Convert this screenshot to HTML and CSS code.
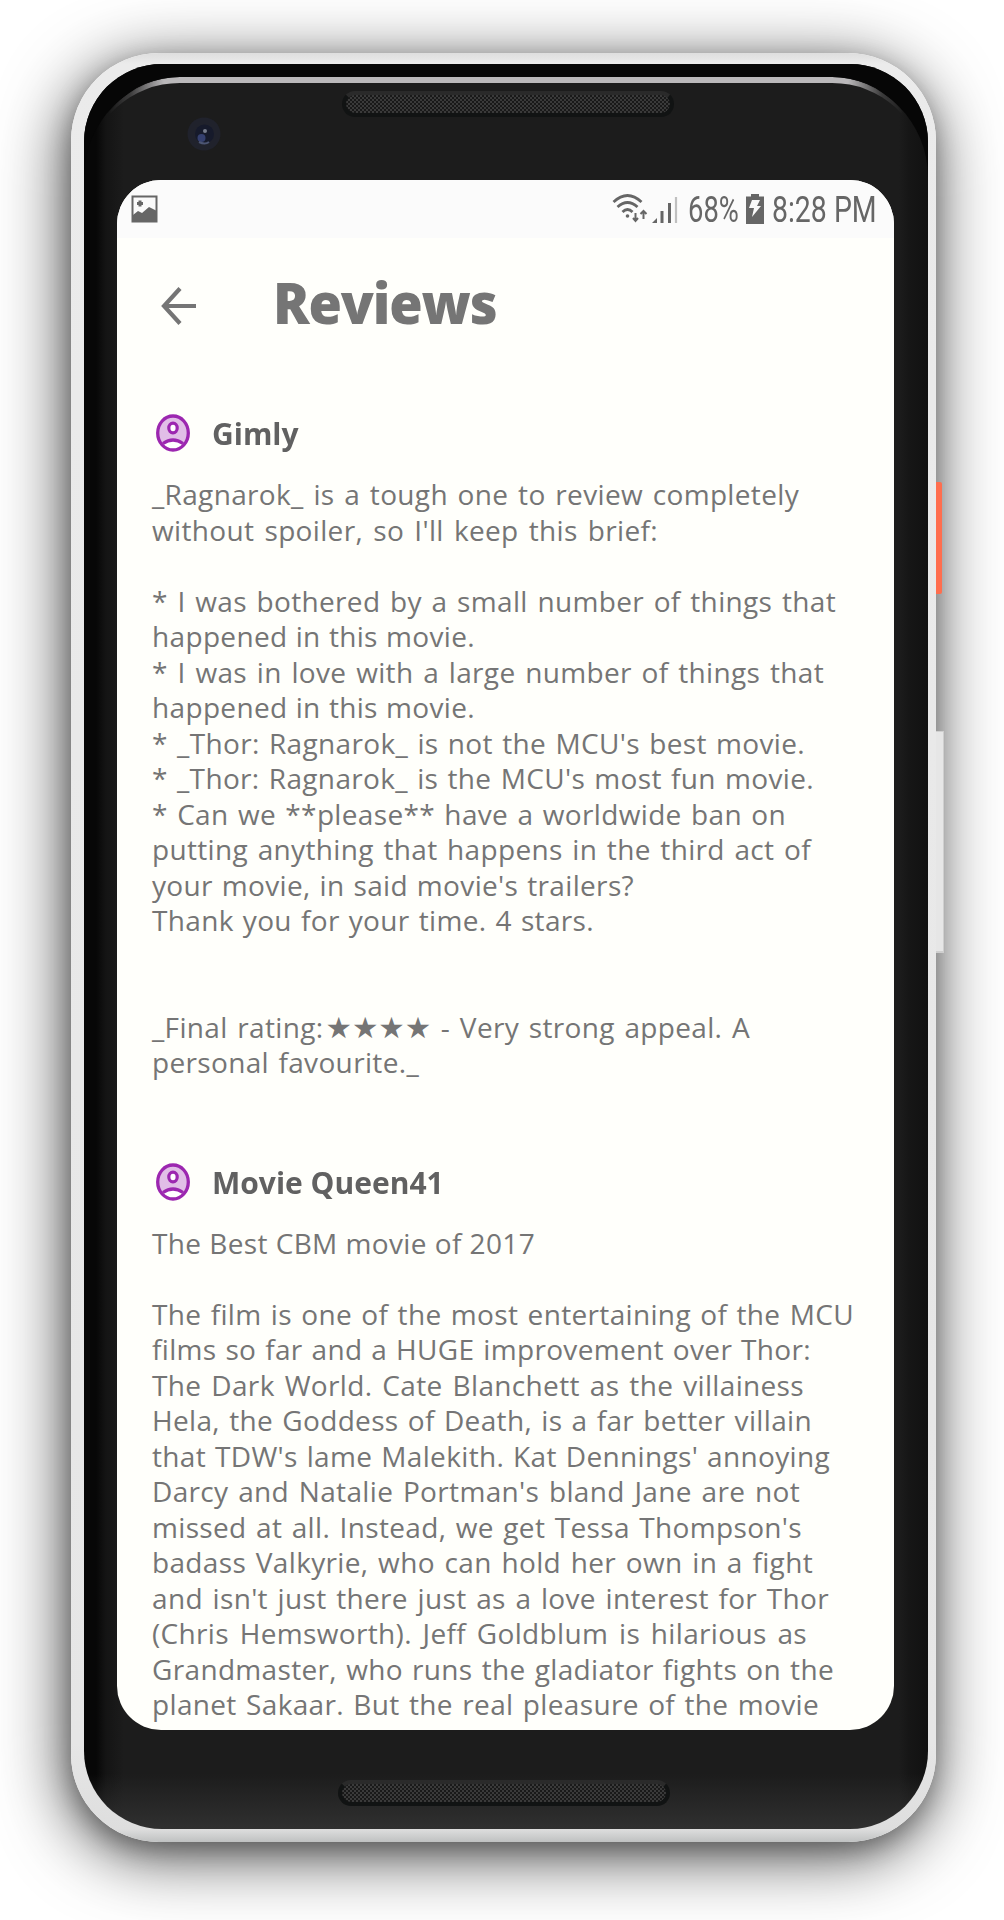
FILE: index.html
```html
<!DOCTYPE html>
<html lang="en">
<head>
<meta charset="utf-8">
<title>Reviews</title>
<link rel="stylesheet" href="styles.css">
</head>
<body>
<svg width="0" height="0" class="defs" aria-hidden="true">
  <symbol id="avatar" viewBox="0 0 34 38">
    <ellipse cx="17" cy="19" rx="15.5" ry="17" fill="#e1bee7"/>
    <path d="M7 29.5Q17 22 27 29.5Q17 40 7 29.5Z" fill="#fff"/>
    <path d="M7 29.5Q17 22.500 27 29.500" fill="none" stroke="#9c27b0" stroke-width="3.300"/>
    <ellipse cx="17" cy="19" rx="15.300" ry="17" fill="none" stroke="#9c27b0" stroke-width="3.300"/>
    <ellipse cx="17" cy="14" rx="4.200" ry="4.900" fill="#fff" stroke="#9c27b0" stroke-width="3.200"/>
  </symbol>
</svg>
<main class="phone">
  <span class="power"></span>
  <span class="volume"></span>
  <div class="body">
    <header class="bezel">
      <svg class="camera" viewBox="0 0 34 34"><circle cx="17" cy="17" r="16.500" fill="#20222c"/><circle cx="17.500" cy="17" r="9.500" fill="#161a2b"/><circle cx="14.500" cy="21" r="4" fill="#35406f"/><circle cx="18" cy="14" r="2" fill="#777c8c"/><path d="M12 25q6 3 10 0" stroke="#4c5573" stroke-width="2" fill="none"/></svg>
      <span class="speaker"></span>
    </header>
    <section class="screen">
      <div class="status">
        <svg class="photo" width="27" height="28" viewBox="0 0 27 28"><path d="M1.500 1.500h24v25h-24z" fill="#fafafa" stroke="#666" stroke-width="2"/><path d="M2 20l5-4 4 2 7-6 8 4v11H2z" fill="#666"/><path d="M9 5.500v6M6 8.500h6" stroke="#666" stroke-width="3"/></svg>
        <div class="indicators">
          <svg width="66" height="32" viewBox="0 0 66 32" fill="none" stroke="#666"><path d="M1.500 9Q15.500-4 29.500 9M5.500 14Q15.500 5 25.500 14M10.500 19Q15.500 14 20.500 19" stroke-width="2.800"/><circle cx="15.500" cy="23" r="1.800" fill="#666" stroke="none"/><path d="M23.500 20v8M21 25l2.500 3 2.500-3M31.500 26v-8M28.500 21l3-3 3 3" stroke-width="2"/><path d="M40 30l5-5v5z" fill="#666" stroke="none"/><path d="M50 30V18" stroke-width="3"/><path d="M57.500 30V10" stroke-width="3"/><path d="M64 30V4" stroke="#c0c0c0" stroke-width="2.200"/></svg>
          <span class="percent">68%</span>
          <svg class="battery" width="18" height="30" viewBox="0 0 18 30"><path d="M0 2.500h5V0h8v2.500h5V30H0z" fill="#666"/><path d="M6 6h8l-3 6h4L6 23l2-9H3z" fill="#fafafa"/></svg>
          <span class="clock">8:28 PM</span>
        </div>
      </div>
      <div class="toolbar">
        <svg width="36" height="40" viewBox="0 0 36 40" fill="none" stroke="#757575" stroke-width="4.200"><path d="M35 20H3M19 2.500L3 20l16 17.500"/></svg>
        <h1>Reviews</h1>
      </div>
      <article class="review">
        <h2><svg><use href="#avatar"/></svg><span>Gimly</span></h2>
        <p>
          <span style="width:647px">_Ragnarok_ is a tough one to review completely</span>
          <span style="width:506px">without spoiler, so I'll keep this brief:</span>
          <span>&nbsp;</span>
          <span style="width:684px">* I was bothered by a small number of things that</span>
          <span style="width:323px">happened in this movie.</span>
          <span style="width:672px">* I was in love with a large number of things that</span>
          <span style="width:323px">happened in this movie.</span>
          <span style="width:653px">* _Thor: Ragnarok_ is not the MCU's best movie.</span>
          <span style="width:662px">* _Thor: Ragnarok_ is the MCU's most fun movie.</span>
          <span style="width:634px">* Can we **please** have a worldwide ban on</span>
          <span style="width:659px">putting anything that happens in the third act of</span>
          <span style="width:482px">your movie, in said movie's trailers?</span>
          <span style="width:442px">Thank you for your time. 4 stars.</span>
          <span>&nbsp;</span>
          <span>&nbsp;</span>
          <span style="width:598px">_Final rating:<b>★★★★</b> - Very strong appeal. A</span>
          <span style="width:267px">personal favourite._</span>
        </p>
      </article>
      <article class="review">
        <h2><svg><use href="#avatar"/></svg><span>Movie Queen41</span></h2>
        <p>
          <span style="width:383px">The Best CBM movie of 2017</span>
          <span>&nbsp;</span>
          <span style="width:702px">The film is one of the most entertaining of the MCU</span>
          <span style="width:659px">films so far and a HUGE improvement over Thor:</span>
          <span style="width:652px">The Dark World. Cate Blanchett as the villainess</span>
          <span style="width:660px">Hela, the Goddess of Death, is a far better villain</span>
          <span style="width:678px">that TDW's lame Malekith. Kat Dennings' annoying</span>
          <span style="width:648px">Darcy and Natalie Portman's bland Jane are not</span>
          <span style="width:650px">missed at all. Instead, we get Tessa Thompson's</span>
          <span style="width:661px">badass Valkyrie, who can hold her own in a fight</span>
          <span style="width:677px">and isn't just there just as a love interest for Thor</span>
          <span style="width:655px">(Chris Hemsworth). Jeff Goldblum is hilarious as</span>
          <span style="width:682px">Grandmaster, who runs the gladiator fights on the</span>
          <span style="width:667px">planet Sakaar. But the real pleasure of the movie</span>
        </p>
      </article>
    </section>
    <footer class="chin"><span class="speaker"></span></footer>
  </div>
</main>
</body>
</html>
```
FILE: styles.css
```css
* { box-sizing: border-box; }
body {
  margin: 0;
  height: 1920px;
  overflow: hidden;
  background: #fff;
  display: flex;
  align-items: flex-start;
  padding: 53px 0 0 71px;
}
.defs { position: absolute; }
.phone {
  position: relative;
  width: 865px;
  height: 1789px;
  padding: 11px 8px 13px 13px;
  border-radius: 88px;
  background: linear-gradient(#dedede, #ebebeb 11px, #e6e6e6 1690px, #dedede 1776px, #bfc1c1);
  box-shadow: -4px 13px 68px rgba(0, 0, 0, .72), -1px 8px 24px rgba(0, 0, 0, .26);
}
.power, .volume { position: absolute; left: 865px; }
.power { top: 429px; width: 6px; height: 112px; background: #ff6e4e; border-radius: 0 2px 2px 0; }
.volume { top: 678px; width: 8px; height: 222px; background: #e6e6e6; border: solid #cfcfcf; border-width: 1px 1px 2px 0; }
.body {
  height: 1765px;
  padding: 0 34px 0 33px;
  border-radius: 78px;
  overflow: hidden;
  position: relative;
  background: linear-gradient(transparent 1710px, #303030 1765px), linear-gradient(90deg, #070707 0 12px, #141414 22px, #1c1c1c 40px 815px, #161616 825px, #111 844px);
}
/* Dark rim that fills the top edge and its corners */
.body::before {
  content: "";
  position: absolute;
  inset: 13px 0 -120px;
  border-radius: 100px;
  box-shadow: 0 0 10px 40px #060606;
  clip-path: inset(-13px 0 1600px);
}
/* Bright reflection along the top of the glass */
.body::after {
  content: "";
  position: absolute;
  left: 6px;
  right: 6px;
  top: 13px;
  height: 150px;
  border-top: 6px solid #bab8ba;
  border-radius: 90px 90px 0 0;
  mask: linear-gradient(90deg, transparent 18px, #0003 40px, #000 74px, #000 calc(100% - 74px), #0003 calc(100% - 40px), transparent calc(100% - 18px));
}
.bezel {
  position: relative;
  height: 116px;
  margin: 0 -34px 0 -33px;
}
.camera { position: absolute; left: 103px; top: 53px; width: 34px; height: 34px; }
.speaker {
  display: block;
  width: 332px;
  height: 26px;
  border: 4px solid #111313;
  border-top-color: #2a2a2a;
  border-radius: 13px;
  background: repeating-conic-gradient(#3a3a3a 0 25%, #191919 0 50%) 0 0 / 4px 4px;
}
.bezel .speaker { position: absolute; left: 258px; top: 27px; }
.chin { display: flex; padding: 50px 0 0 221px; }
.screen {
  position: relative;
  height: 1550px;
  overflow: hidden;
  border-radius: 44px;
  background: #fffffb;
  color: #757575;
  font-family: "Open Sans", sans-serif;
}
.status {
  height: 58px;
  padding: 0 17px 0 14px;
  background: #fbfbfb;
  display: flex;
  justify-content: space-between;
  color: #666;
  font: 36px/60px Roboto, sans-serif;
}
.photo { margin-top: 15px; }
.indicators { display: flex; align-items: center; white-space: nowrap; }
.percent, .clock { transform-origin: left; height: 58px; }
.percent { margin-left: 10px; width: 51px; transform: scaleX(.76); }
.battery { margin-left: 7px; }
.clock { margin-left: 8px; width: 105px; transform: scaleX(.79); }
.toolbar { display: flex; align-items: center; height: 132px; padding: 3px 0 0 44px; gap: 76px; }
h1 { margin: -7px 0 0; font: 800 57px/70px "Open Sans", sans-serif; letter-spacing: -1.200px; transform: scaleX(.95); transform-origin: left; }
.review { padding-left: 35px; }
h2 { margin: 27px 0 0; display: flex; align-items: center; gap: 22px; height: 72px; padding-left: 4px; color: #616161; font: 700 31px/40px "Open Sans", sans-serif; }
h2 span { transform: scaleX(.968); transform-origin: left; }
h2 svg { width: 34px; height: 38px; }
p { margin: 0 0 65px; padding-top: 8px; font-size: 28px; line-height: 35.500px; letter-spacing: .34px; }
p span { display: block; white-space: nowrap; text-align: left; text-align-last: justify; }
p b { display: inline-block; margin-left: 2px; font: 29.500px/20px "DejaVu Sans", sans-serif; letter-spacing: 0; text-align-last: left; }
```
